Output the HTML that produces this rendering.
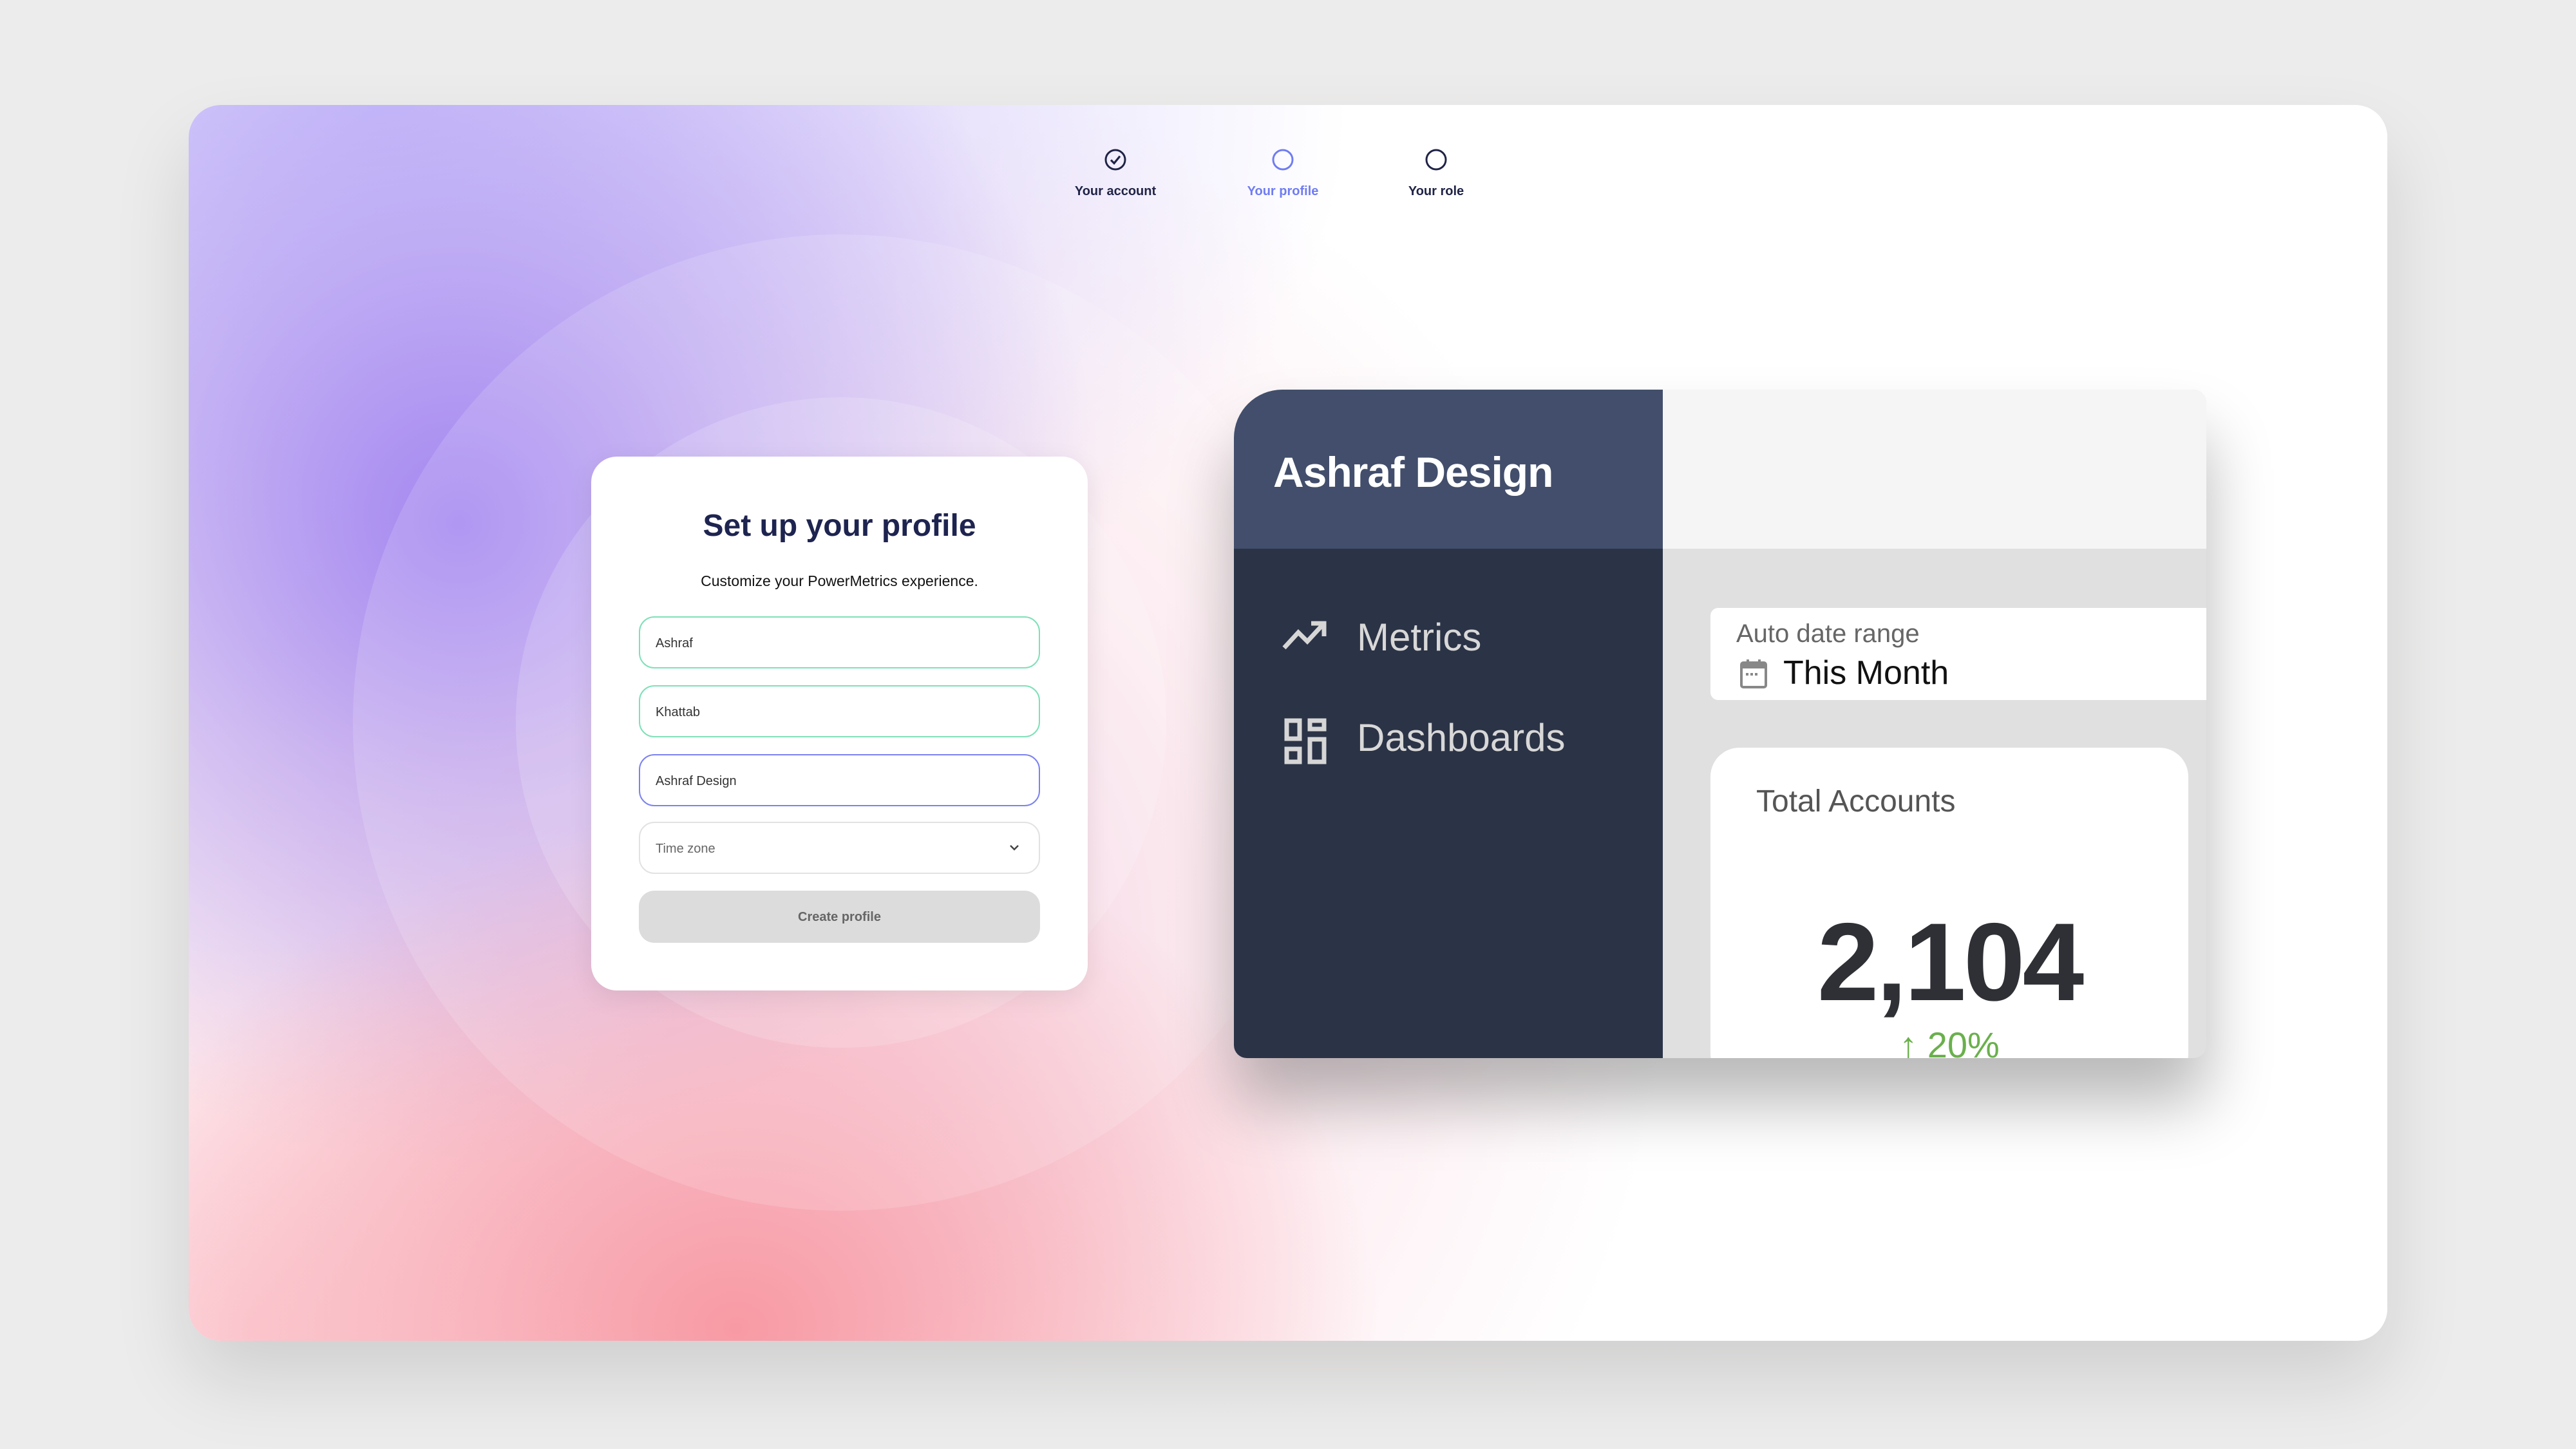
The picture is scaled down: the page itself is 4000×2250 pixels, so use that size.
<!DOCTYPE html>
<html><head><meta charset="utf-8"><style>
*{margin:0;padding:0;box-sizing:border-box}
body{width:4000px;height:2250px;overflow:hidden;background:#ececec;font-family:"Liberation Sans",sans-serif;position:relative}
.glow{position:absolute;left:0;top:0;width:4000px;height:2250px;background:radial-gradient(ellipse 1900px 1100px at 2000px 1150px,#f3eee8 0%,#ececec 100%)}
.main{position:absolute;left:293px;top:163px;width:3414px;height:1919px;border-radius:50px;overflow:hidden;background:#fff;box-shadow:0 60px 120px rgba(0,0,0,0.12)}
.bg{position:absolute;inset:0;background:
radial-gradient(ellipse 1000px 800px at 850px 1900px,rgba(248,150,160,0.95) 0%,rgba(248,165,175,0.65) 45%,rgba(252,200,205,0) 100%),
radial-gradient(ellipse 700px 600px at 100px 1900px,rgba(252,205,212,0.9) 0%,rgba(252,215,220,0) 100%),
radial-gradient(ellipse 1000px 1000px at 420px 650px,rgba(160,130,240,0.95) 0%,rgba(175,150,240,0.6) 45%,rgba(200,190,245,0) 100%),
radial-gradient(ellipse 1500px 1000px at 300px 0px,rgba(205,198,252,1) 0%,rgba(205,195,250,0.55) 50%,rgba(255,255,255,0) 100%),
radial-gradient(ellipse 1400px 1400px at 900px 1300px,rgba(240,185,210,0.9) 0%,rgba(250,215,225,0.5) 55%,rgba(255,255,255,0) 100%),
linear-gradient(90deg,rgba(255,255,255,0) 0%,#fff 60%)}
.c1{position:absolute;left:255px;top:201px;width:1516px;height:1516px;border-radius:50%;background:rgba(255,255,255,0.14)}
.c2{position:absolute;left:508px;top:454px;width:1010px;height:1010px;border-radius:50%;background:rgba(255,255,255,0.16)}
.step{position:absolute;top:0;text-align:center;width:240px;font-size:20px;font-weight:bold;color:#1f2346}
.step .ic{position:absolute;left:103px;top:68px;width:34px;height:34px}
.step span{position:absolute;top:123px;left:0;width:240px}
.form{position:absolute;left:918px;top:709px;width:771px;height:829px;background:#fff;border-radius:40px;box-shadow:0 10px 40px rgba(0,0,0,0.08)}
.form h1{position:absolute;top:80px;width:100%;text-align:center;font-size:48px;color:#1e2450;font-weight:bold}
.form p{position:absolute;top:180px;width:100%;text-align:center;font-size:23px;color:#111}
.in{position:absolute;left:74px;width:623px;height:81px;border:2px solid #7ee0b8;border-radius:24px;font-size:20px;color:#333;padding-left:24px;line-height:80px}
.btn{position:absolute;left:74px;top:674px;width:623px;height:81px;background:#dcdcdc;border-radius:24px;text-align:center;line-height:83px;font-size:20px;font-weight:bold;color:#666}
.dash{position:absolute;left:1916px;top:605px;width:1510px;height:1038px;border-radius:75px 20px 20px 20px;overflow:hidden;background:#e0e0e0;box-shadow:0 70px 100px rgba(0,0,0,0.28)}
</style></head><body>
<div class="glow"></div>
<div class="main">
<div class="bg"></div>
<div class="c1"></div><div class="c2"></div>
<div class="step" style="left:1319px"><svg class="ic" viewBox="0 0 34 34"><circle cx="17" cy="17" r="15" fill="none" stroke="#1f2346" stroke-width="3"/><path d="M10 17.5l5 5 9-11" fill="none" stroke="#1f2346" stroke-width="3.2"/></svg><span>Your account</span></div>
<div class="step" style="left:1579px;color:#6f7cf2"><svg class="ic" viewBox="0 0 34 34"><circle cx="17" cy="17" r="15" fill="none" stroke="#6f7cf2" stroke-width="3"/></svg><span>Your profile</span></div>
<div class="step" style="left:1817px"><svg class="ic" viewBox="0 0 34 34"><circle cx="17" cy="17" r="15" fill="none" stroke="#1f2346" stroke-width="3"/></svg><span>Your role</span></div>
</div>

<div class="form">
<h1>Set up your profile</h1>
<p>Customize your PowerMetrics experience.</p>
<div class="in" style="top:248px">Ashraf</div>
<div class="in" style="top:355px">Khattab</div>
<div class="in" style="top:462px;border-color:#7b82f0">Ashraf Design</div>
<div class="in" style="top:567px;border-color:#e2e2e2;color:#666">Time zone<svg style="position:absolute;right:30px;top:32px" width="16" height="12" viewBox="0 0 16 12"><path d="M2 3l6 6 6-6" fill="none" stroke="#444" stroke-width="2.5"/></svg></div>
<div class="btn">Create profile</div>
</div>

<div class="dash">
<div style="position:absolute;left:0;top:0;width:666px;height:247px;background:#424e6b"></div>
<div style="position:absolute;left:0;top:247px;width:666px;height:791px;background:#2b3346"></div>
<div style="position:absolute;left:666px;top:0;width:844px;height:247px;background:#f5f5f5"></div>
<div style="position:absolute;left:61px;top:90px;font-size:66px;font-weight:bold;color:#fff;letter-spacing:-1px">Ashraf Design</div>
<svg style="position:absolute;left:74px;top:357px" width="72" height="48" viewBox="0 0 72 48"><path d="M4 44L26 20l14 14 24-26M46 6h20v20" fill="none" stroke="#d6d6d6" stroke-width="7"/></svg>
<div style="position:absolute;left:191px;top:350px;font-size:60px;color:#d8d8d8">Metrics</div>
<svg style="position:absolute;left:78px;top:510px" width="66" height="72" viewBox="0 0 66 72"><g fill="none" stroke="#d6d6d6" stroke-width="7"><rect x="4" y="4" width="20" height="28"/><rect x="40" y="4" width="22" height="13"/><rect x="4" y="48" width="20" height="20"/><rect x="40" y="33" width="22" height="35"/></g></svg>
<div style="position:absolute;left:191px;top:506px;font-size:60px;color:#d8d8d8">Dashboards</div>
<div style="position:absolute;left:740px;top:339px;width:800px;height:143px;background:#fff;border-radius:12px"></div>
<div style="position:absolute;left:780px;top:357px;font-size:40px;color:#666">Auto date range</div>
<svg style="position:absolute;left:786px;top:418px" width="42" height="46" viewBox="0 0 42 46"><rect x="2" y="6" width="38" height="38" rx="3" fill="none" stroke="#888" stroke-width="4"/><rect x="2" y="6" width="38" height="9" fill="#888"/><rect x="10" y="1" width="4" height="8" fill="#888"/><rect x="28" y="1" width="4" height="8" fill="#888"/><g fill="#888"><rect x="9" y="22" width="4" height="4"/><rect x="16" y="22" width="4" height="4"/><rect x="23" y="22" width="4" height="4"/></g></svg>
<div style="position:absolute;left:853px;top:410px;font-size:52px;color:#111">This Month</div>
<div style="position:absolute;left:740px;top:556px;width:742px;height:520px;background:#fff;border-radius:45px"></div>
<div style="position:absolute;left:811px;top:612px;font-size:48px;color:#555">Total Accounts</div>
<div style="position:absolute;left:740px;top:790px;width:742px;text-align:center;font-size:172px;font-weight:bold;color:#2f3035;letter-spacing:-4px">2,104</div>
<div style="position:absolute;left:740px;top:985px;width:742px;text-align:center;font-size:56px;color:#6ab04c">↑ 20%</div>
</div>
</body></html>
